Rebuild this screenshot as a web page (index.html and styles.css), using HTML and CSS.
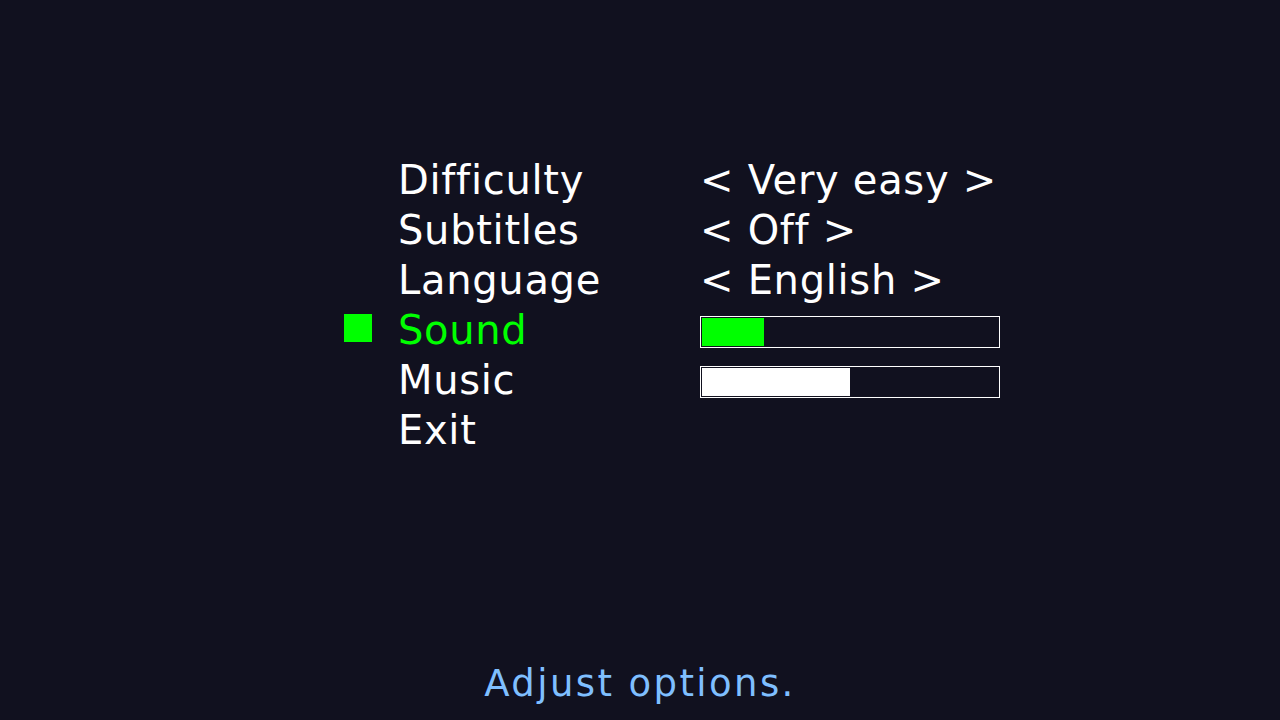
FILE: index.html
```html
<!DOCTYPE html>
<html lang="en">
<head>
<meta charset="utf-8">
<title>Options</title>
<link rel="stylesheet" href="styles.css">
</head>
<body>
<main class="menu">
  <div class="row">
    <span class="marker"></span>
    <span class="label">Difficulty</span>
    <span class="value">&lt; Very easy &gt;</span>
  </div>
  <div class="row">
    <span class="marker"></span>
    <span class="label">Subtitles</span>
    <span class="value">&lt; Off &gt;</span>
  </div>
  <div class="row">
    <span class="marker"></span>
    <span class="label">Language</span>
    <span class="value">&lt; English &gt;</span>
  </div>
  <div class="row selected">
    <span class="marker"></span>
    <span class="label">Sound</span>
    <span class="bar"><span class="fill" style="width: 21%"></span></span>
  </div>
  <div class="row">
    <span class="marker"></span>
    <span class="label">Music</span>
    <span class="bar"><span class="fill" style="width: 50%"></span></span>
  </div>
  <div class="row">
    <span class="marker"></span>
    <span class="label">Exit</span>
    <span class="value"></span>
  </div>
</main>
<footer class="hint">Adjust options.</footer>
</body>
</html>
```

FILE: styles.css
```css
html, body {
  margin: 0;
  padding: 0;
}

body {
  width: 1280px;
  height: 720px;
  background: #11111f;
  color: #ffffff;
  font-family: "DejaVu Sans", "Liberation Sans", sans-serif;
  display: flex;
  flex-direction: column;
  overflow: hidden;
}

.menu {
  padding-top: 155px;
  margin-left: 344px;
  display: flex;
  flex-direction: column;
}

.row {
  display: grid;
  grid-template-columns: 54px 302px 300px;
  height: 50px;
  font-size: 40px;
  line-height: 50px;
  letter-spacing: 0.7px;
}

.marker {
  width: 28px;
  height: 28px;
  margin-top: 9px;
}

.selected .marker {
  background: #00ff00;
}

.selected .label {
  color: #00ff00;
}

.label,
.value {
  white-space: pre;
}

.bar {
  box-sizing: border-box;
  width: 300px;
  height: 32px;
  margin-top: 11px;
  border: 1px solid #ffffff;
  padding: 1px;
  display: flex;
}

.fill {
  display: block;
  height: 100%;
  background: #ffffff;
}

.selected .fill {
  background: #00ff00;
}

.hint {
  margin-top: auto;
  padding-bottom: 16px;
  text-align: center;
  color: #7fbfff;
  font-size: 37px;
  line-height: 40px;
  letter-spacing: 2.4px;
}
```
